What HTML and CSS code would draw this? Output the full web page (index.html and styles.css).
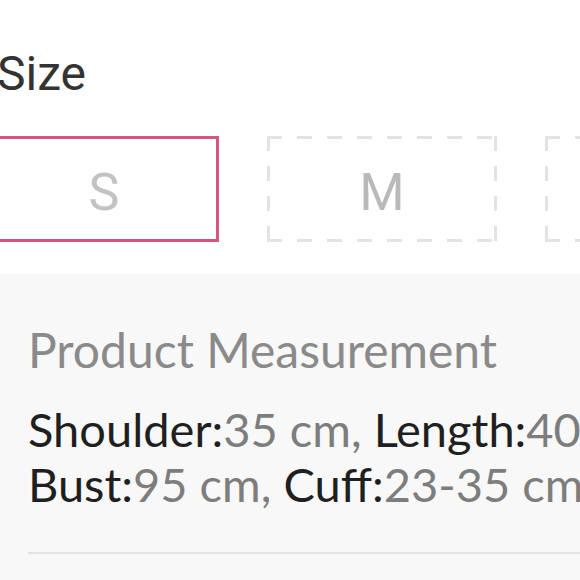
FILE: index.html
```html
<!DOCTYPE html>
<html>
<head>
<meta charset="utf-8">
<link rel="stylesheet" href="styles.css">
</head>
<body>
<div class="page">
  <div class="size-title">Size</div>
  <div class="options">
    <div class="opt opt-selected">S</div>
    <div class="opt opt-dashed">M</div>
    <div class="opt opt-dashed">L</div>
  </div>
  <div class="measure">
    <div class="measure-title">Product Measurement</div>
    <div class="measure-text">
      <div class="line"><span class="k">Shoulder:</span><span class="v">35 cm, </span><span class="k">Length:</span><span class="v">40 cm</span></div>
      <div class="line"><span class="k">Bust:</span><span class="v">95 cm, </span><span class="k">Cuff:</span><span class="v">23-35 cm</span></div>
    </div>
    <div class="divider"></div>
  </div>
</div>
</body>
</html>
```
FILE: styles.css
```css
html, body {
  margin: 0;
  padding: 0;
  background: #ffffff;
  overflow: hidden;
}
.page {
  width: 580px;
  height: 580px;
  overflow: hidden;
  font-family: Roboto, "Noto Sans", sans-serif;
}
.size-title {
  margin-left: -3px;
  padding-top: 44px;
  font-size: 48px;
  line-height: 60px;
  color: #333333;
}
.options {
  display: flex;
  gap: 48px;
  margin-top: 32px;
  margin-left: -11px;
}
.opt {
  flex: 0 0 auto;
  width: 230px;
  height: 106px;
  box-sizing: border-box;
  display: flex;
  align-items: center;
  justify-content: center;
  padding-top: 7px;
  font-size: 52px;
  color: #b9b9b9;
}
.opt-selected {
  border: 3px solid #d4557f;
  color: #c2c2c2;
}
.opt-dashed {
  background:
    repeating-linear-gradient(90deg, #e3e3e3 0 15px, transparent 15px 30px) top left / 100% 3px no-repeat,
    repeating-linear-gradient(90deg, #e3e3e3 0 15px, transparent 15px 30px) bottom left / 100% 3px no-repeat,
    repeating-linear-gradient(180deg, #e3e3e3 0 15px, transparent 15px 30px) top left / 3px 100% no-repeat,
    repeating-linear-gradient(180deg, #e3e3e3 0 15px, transparent 15px 30px) top right / 3px 100% no-repeat;
}
.measure {
  margin-top: 32px;
  background: #f8f8f8;
  padding: 46px 0 0 28px;
  height: 400px;
  font-family: Lato, Roboto, sans-serif;
}
.measure-title {
  font-size: 48px;
  line-height: 60px;
  color: #8a8a8a;
}
.measure-text {
  margin-top: 22px;
  font-size: 47px;
  line-height: 55px;
  white-space: nowrap;
}
.k {
  color: #1f1f1f;
}
.v {
  color: #7d7d7d;
}
.divider {
  margin-top: 40px;
  height: 2px;
  background: #e2e2e2;
}
```
